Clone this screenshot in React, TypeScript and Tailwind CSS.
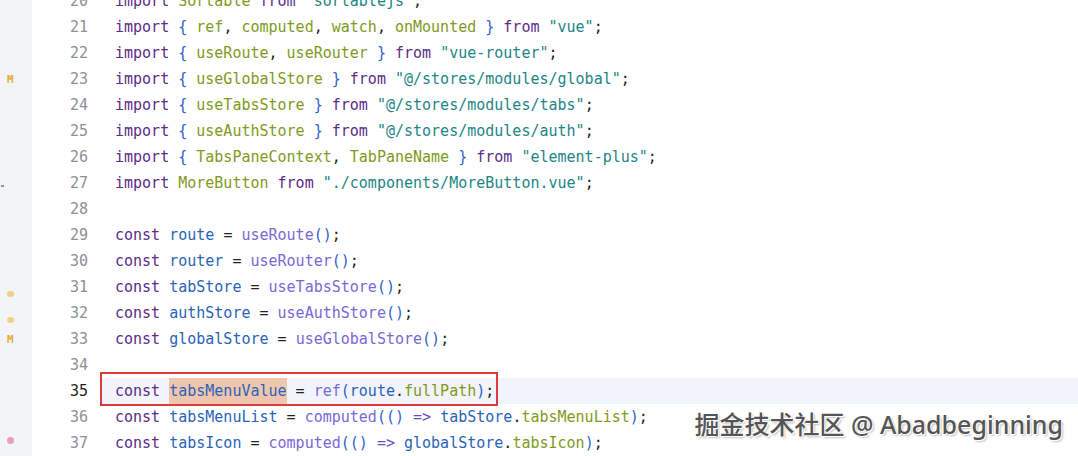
import React from 'react';

type Tok = [string, string];

const C = {
  kw: 'text-[#5b2c8a]',
  br: 'text-[#2f5fcf]',
  imp: 'text-[#7f9a1c]',
  str: 'text-[#1d8686]',
  v: 'text-[#2b63b9]',
  fn: 'text-[#7a68d6]',
  p: 'text-[#222222]',
  ar: 'text-[#6b4cc6]',
};

const lines: { n: number; toks: Tok[]; mark?: string }[] = [
  { n: 20, toks: [['import ', C.kw], ['Sortable ', C.imp], ['from ', C.kw], ['"sortablejs"', C.str], [';', C.p]] },
  {
    n: 21,
    toks: [
      ['import ', C.kw], ['{ ', C.br], ['ref', C.imp], [', ', C.p], ['computed', C.imp], [', ', C.p],
      ['watch', C.imp], [', ', C.p], ['onMounted ', C.imp], ['} ', C.br], ['from ', C.kw], ['"vue"', C.str], [';', C.p],
    ],
  },
  {
    n: 22,
    toks: [
      ['import ', C.kw], ['{ ', C.br], ['useRoute', C.imp], [', ', C.p], ['useRouter ', C.imp], ['} ', C.br],
      ['from ', C.kw], ['"vue-router"', C.str], [';', C.p],
    ],
  },
  {
    n: 23,
    mark: 'M',
    toks: [['import ', C.kw], ['{ ', C.br], ['useGlobalStore ', C.imp], ['} ', C.br], ['from ', C.kw], ['"@/stores/modules/global"', C.str], [';', C.p]],
  },
  {
    n: 24,
    toks: [['import ', C.kw], ['{ ', C.br], ['useTabsStore ', C.imp], ['} ', C.br], ['from ', C.kw], ['"@/stores/modules/tabs"', C.str], [';', C.p]],
  },
  {
    n: 25,
    toks: [['import ', C.kw], ['{ ', C.br], ['useAuthStore ', C.imp], ['} ', C.br], ['from ', C.kw], ['"@/stores/modules/auth"', C.str], [';', C.p]],
  },
  {
    n: 26,
    toks: [
      ['import ', C.kw], ['{ ', C.br], ['TabsPaneContext', C.imp], [', ', C.p], ['TabPaneName ', C.imp], ['} ', C.br],
      ['from ', C.kw], ['"element-plus"', C.str], [';', C.p],
    ],
  },
  {
    n: 27,
    mark: 'tick',
    toks: [['import ', C.kw], ['MoreButton ', C.imp], ['from ', C.kw], ['"./components/MoreButton.vue"', C.str], [';', C.p]],
  },
  { n: 28, toks: [] },
  { n: 29, toks: [['const ', C.kw], ['route ', C.v], ['= ', C.p], ['useRoute', C.fn], ['()', C.br], [';', C.p]] },
  { n: 30, toks: [['const ', C.kw], ['router ', C.v], ['= ', C.p], ['useRouter', C.fn], ['()', C.br], [';', C.p]] },
  { n: 31, mark: 'dot', toks: [['const ', C.kw], ['tabStore ', C.v], ['= ', C.p], ['useTabsStore', C.fn], ['()', C.br], [';', C.p]] },
  { n: 32, mark: 'dot', toks: [['const ', C.kw], ['authStore ', C.v], ['= ', C.p], ['useAuthStore', C.fn], ['()', C.br], [';', C.p]] },
  { n: 33, mark: 'M', toks: [['const ', C.kw], ['globalStore ', C.v], ['= ', C.p], ['useGlobalStore', C.fn], ['()', C.br], [';', C.p]] },
  { n: 34, toks: [] },
  { n: 35, toks: [] },
  {
    n: 36,
    toks: [
      ['const ', C.kw], ['tabsMenuList ', C.v], ['= ', C.p], ['computed', C.fn], ['(', C.br], ['() ', C.br], ['=> ', C.ar],
      ['tabStore', C.v], ['.', C.p], ['tabsMenuList', C.imp], [')', C.br], [';', C.p],
    ],
  },
  {
    n: 37,
    mark: 'pink',
    toks: [
      ['const ', C.kw], ['tabsIcon ', C.v], ['= ', C.p], ['computed', C.fn], ['(', C.br], ['() ', C.br], ['=> ', C.ar],
      ['globalStore', C.v], ['.', C.p], ['tabsIcon', C.imp], [')', C.br], [';', C.p],
    ],
  },
];

function Mark({ kind }: { kind?: string }) {
  if (kind === 'M') return <span className="text-[11px] font-bold text-[#e8a93a] leading-none">M</span>;
  if (kind === 'dot') return <span className="block w-[7px] h-[6px] rounded-full bg-[#f1cf86] mt-[14px]" />;
  if (kind === 'pink') return <span className="block w-[7px] h-[7px] rounded-full bg-[#e7a0ae] mt-[-6px]" />;
  if (kind === 'tick') return <span className="block w-[3px] h-[2px] bg-[#8a93a8] -ml-[6px] mt-[6px]" />;
  return null;
}

function Code({ toks }: { toks: Tok[] }) {
  return (
    <>
      {toks.map(([t, c], i) => (
        <span key={i} className={c}>
          {t}
        </span>
      ))}
    </>
  );
}

export default function App() {
  return (
    <div className="relative w-[1078px] h-[456px] overflow-hidden bg-white font-['DejaVu_Sans_Mono',monospace] text-[15px]">
      <div className="flex flex-col -mt-[12px]">
        {lines.map((l) => (
          <div key={l.n} className="flex h-[26px] items-center">
            <div className="w-[32px] h-full bg-[#f3f4f8] flex items-center pl-[7px]">
              <Mark kind={l.mark} />
            </div>
            <div className={`w-[56px] text-right ${l.n === 35 ? 'text-[#1f1f1f]' : 'text-[#8b9099]'}`}>{l.n}</div>
            {l.n === 35 ? (
              <div className="flex-1 h-full ml-[12px] bg-[#f2f4fb] flex items-center pl-[15px] whitespace-pre">
                <span className="relative">
                  <span className={C.kw}>const </span>
                  <span className={`${C.v} bg-[#efc6ad] py-[4px]`}>tabsMenuValue</span>
                  <span className={C.p}> = </span>
                  <span className={C.fn}>ref</span>
                  <span className={C.br}>(</span>
                  <span className={C.v}>route</span>
                  <span className={C.p}>.</span>
                  <span className={C.imp}>fullPath</span>
                  <span className={C.br}>)</span>
                  <span className={C.p}>;</span>
                  <span className="absolute -left-[15px] -right-[4px] -top-[8px] -bottom-[4px] border-2 border-[#e03a3e]" />
                </span>
              </div>
            ) : (
              <div className="flex-1 pl-[27px] whitespace-pre">
                <Code toks={l.toks} />
              </div>
            )}
          </div>
        ))}
      </div>
      <div className="absolute right-[15px] top-[407px] text-[25px] leading-[34px] font-medium text-[#555] font-['Noto_Sans','Noto_Sans_CJK_SC',sans-serif] [text-shadow:1px_1px_0_#fff,-1px_-1px_0_#fff,2px_2px_2px_rgba(0,0,0,0.25)]">
        掘金技术社区 @ Abadbeginning
      </div>
    </div>
  );
}
